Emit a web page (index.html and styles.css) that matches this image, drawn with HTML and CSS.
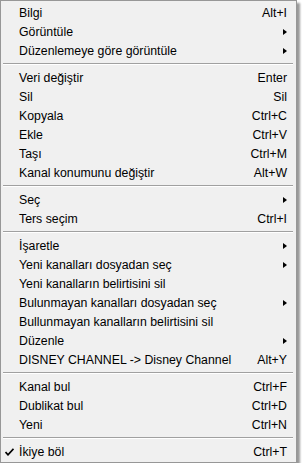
FILE: index.html
```html
<!DOCTYPE html>
<html lang="tr">
  <head>
    <meta charset="UTF-8" />
    <title>Menu</title>
    <link rel="stylesheet" href="styles.css">
  </head>
  <body>
    <div class="menu">
      <div class="item"><span>Bilgi</span><span class="key">Alt+I</span></div>
      <div class="item"><span>Görüntüle</span><span class="arrow"></span></div>
      <div class="item"><span>Düzenlemeye göre görüntüle</span><span class="arrow"></span></div>
      <div class="sep"></div>
      <div class="item"><span>Veri değiştir</span><span class="key">Enter</span></div>
      <div class="item"><span>Sil</span><span class="key">Sil</span></div>
      <div class="item"><span>Kopyala</span><span class="key">Ctrl+C</span></div>
      <div class="item"><span>Ekle</span><span class="key">Ctrl+V</span></div>
      <div class="item"><span>Taşı</span><span class="key">Ctrl+M</span></div>
      <div class="item"><span>Kanal konumunu değiştir</span><span class="key">Alt+W</span></div>
      <div class="sep"></div>
      <div class="item"><span>Seç</span><span class="arrow"></span></div>
      <div class="item"><span>Ters seçim</span><span class="key">Ctrl+I</span></div>
      <div class="sep"></div>
      <div class="item"><span>İşaretle</span><span class="arrow"></span></div>
      <div class="item"><span>Yeni kanalları dosyadan seç</span><span class="arrow"></span></div>
      <div class="item"><span>Yeni kanalların belirtisini sil</span></div>
      <div class="item"><span>Bulunmayan kanalları dosyadan seç</span><span class="arrow"></span></div>
      <div class="item"><span>Bullunmayan kanalların belirtisini sil</span></div>
      <div class="item"><span>Düzenle</span><span class="arrow"></span></div>
      <div class="item"><span>DISNEY CHANNEL -&gt; Disney Channel</span><span class="key">Alt+Y</span></div>
      <div class="sep"></div>
      <div class="item"><span>Kanal bul</span><span class="key">Ctrl+F</span></div>
      <div class="item"><span>Dublikat bul</span><span class="key">Ctrl+D</span></div>
      <div class="item"><span>Yeni</span><span class="key">Ctrl+N</span></div>
      <div class="sep"></div>
      <div class="item checked">
        <svg class="check" width="9" height="8" viewBox="0 0 9 8">
          <path d="M0.5 4 L3 6.8 L8.5 0.8" fill="none" stroke="#000" stroke-width="1.7" />
        </svg>
        <span>İkiye böl</span><span class="key">Ctrl+T</span>
      </div>
    </div>
  </body>
</html>
```

FILE: styles.css
```css
* {
  margin: 0;
  padding: 0;
  box-sizing: border-box;
}

body {
  font-family: "Liberation Sans", Arial, sans-serif;
  font-size: 12.3px;
  background-color: #fff;
}

.menu {
  width: 297px;
  height: 463px;
  padding: 2px 0;
  background-color: #f0f0f0;
  border: 1px solid #979797;
  box-shadow: 3px 3px 2px rgba(0, 0, 0, 0.4);
  color: #000;
}

.item {
  position: relative;
  display: flex;
  align-items: center;
  justify-content: space-between;
  height: 19px;
  padding: 0 8px 0 18px;
}

.key {
  padding-right: 1px;
}

.arrow {
  width: 0;
  height: 0;
  margin-right: 1px;
  border-top: 3.5px solid transparent;
  border-bottom: 3.5px solid transparent;
  border-left: 4px solid #000;
}

.sep {
  height: 8px;
  margin: 0 3px 0 2px;
  display: flex;
  flex-direction: column;
  justify-content: center;
}

.sep::before {
  content: "";
  display: block;
  border-top: 1px solid #a0a0a0;
  border-bottom: 1px solid #fff;
}

.check {
  position: absolute;
  left: 4px;
  top: 6px;
}
```
